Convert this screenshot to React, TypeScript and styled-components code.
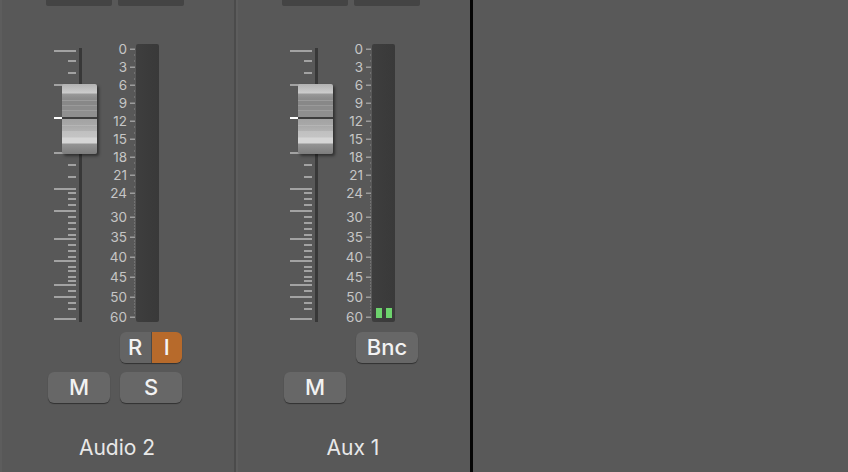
import styled, { createGlobalStyle } from "styled-components";

const GlobalStyle = createGlobalStyle`
  html, body {
    margin: 0;
    padding: 0;
    background: #585858;
  }
  body {
    font-family: Inter, "Liberation Sans", sans-serif;
    -webkit-font-smoothing: antialiased;
  }
`;

// page y where the fader / meter block starts
const TOP = 44;

const faderLong = [51, 85, 153, 189, 211, 239, 261, 285, 297, 319];
const faderShort = [
  61, 73, 165, 177, 193, 199, 205, 217, 223, 229, 235, 245, 251, 257, 267,
  271, 277, 281, 291, 303, 309,
];

const scaleMarks: [string, number][] = [
  ["0", 49], ["3", 67], ["6", 85], ["9", 103], ["12", 121], ["15", 139],
  ["18", 157], ["21", 175], ["24", 193], ["30", 217], ["35", 237],
  ["40", 257], ["45", 277], ["50", 297], ["60", 317],
];

const scaleDots: number[] = [];
for (let y = 55; y < 193; y += 6) if ((y - 49) % 18 !== 0) scaleDots.push(y);
for (let y = 196; y < 316; y += 3) {
  if (!scaleMarks.some(([, m]) => Math.abs(m - y) < 2)) scaleDots.push(y);
}

interface channel {
  name: string;
  topButtons: ("RI" | "Bnc" | null)[];
  bottomButtons: (string | null)[];
  level?: number;
}

const channels: channel[] = [
  { name: "Audio 2", topButtons: [null, "RI"], bottomButtons: ["M", "S"] },
  { name: "Aux 1", topButtons: [null, "Bnc"], bottomButtons: ["M", null], level: 10 },
];

function FaderTicks() {
  return (
    <svg width="44" height="278" viewBox="0 0 44 278" style={{ display: "block" }}>
      <rect x="25" y="4" width="3" height="274" fill="#383838" />
      {faderLong.map((y) => (
        <rect key={"l" + y} x="0" y={y - TOP - 1} width="22" height="2" fill="#a2a2a2" />
      ))}
      {faderShort.map((y) => (
        <rect key={"s" + y} x="14" y={y - TOP - 1} width="8" height="2" fill="#a2a2a2" />
      ))}
      <rect x="0" y={118 - TOP - 1} width="8" height="2" fill="#ffffff" />
    </svg>
  );
}

function ScaleTicks() {
  return (
    <svg width="8" height="278" viewBox="0 0 8 278">
      {scaleMarks.map(([label, y]) => (
        <rect key={label} x="2" y={y - TOP - 0.5} width="5" height="1.5" fill="#9c9c9c" />
      ))}
      {scaleDots.map((y) => (
        <rect key={y} x="6" y={y - TOP - 0.5} width="1" height="1" fill="#8c8c8c" />
      ))}
    </svg>
  );
}

function Strip({ ch }: { ch: channel }) {
  return (
    <StripWrap>
      <Tabs>
        <Tab />
        <Tab />
      </Tabs>
      <FaderRow>
        <Fader>
          <FaderTicks />
          <Cap />
        </Fader>
        <Scale>
          {scaleMarks.map(([label, y]) => (
            <ScaleLabel key={label} style={{ top: y - TOP - 8 }}>
              {label}
            </ScaleLabel>
          ))}
          <ScaleSvg>
            <ScaleTicks />
          </ScaleSvg>
        </Scale>
        <Meter>
          {ch.level ? (
            <>
              <Level $left={4} style={{ height: ch.level }} />
              <Level $left={14} style={{ height: ch.level }} />
            </>
          ) : null}
        </Meter>
      </FaderRow>
      <Buttons>
        {ch.topButtons.map((b, i) =>
          b === "RI" ? (
            <Split key={i}>
              <SplitHalf>R</SplitHalf>
              <SplitHalf $active>I</SplitHalf>
            </Split>
          ) : b ? (
            <Btn key={i}>{b}</Btn>
          ) : (
            <span key={i} />
          )
        )}
        {ch.bottomButtons.map((b, i) =>
          b ? <Btn key={"b" + i}>{b}</Btn> : <span key={"b" + i} />
        )}
      </Buttons>
      <Name>{ch.name}</Name>
    </StripWrap>
  );
}

export default function App() {
  return (
    <Page>
      <GlobalStyle />
      <Strip ch={channels[0]} />
      <Separator />
      <Strip ch={channels[1]} />
      <Edge />
      <Empty />
    </Page>
  );
}

const Page = styled.div`
  display: flex;
  width: 848px;
  height: 472px;
  overflow: hidden;
  background: #585858;
`;

const StripWrap = styled.div`
  width: 234px;
  flex-shrink: 0;
  display: flex;
  flex-direction: column;
  background: #585858;
  box-shadow: inset 2px 0 0 #5d5d5d;
`;

const Separator = styled.div`
  width: 2px;
  flex-shrink: 0;
  background: #4b4b4b;
`;

const Edge = styled.div`
  width: 3px;
  flex-shrink: 0;
  background: #050505;
`;

const Empty = styled.div`
  flex: 1;
  background: #595959;
`;

const Tabs = styled.div`
  display: flex;
  gap: 6px;
  padding-left: 46px;
  height: 6px;
`;

const Tab = styled.div`
  width: 66px;
  height: 6px;
  background: #444444;
  border-radius: 0 0 2px 2px;
`;

const FaderRow = styled.div`
  display: flex;
  height: 278px;
  margin-top: 38px;
  padding-left: 54px;
`;

const Fader = styled.div`
  position: relative;
  width: 44px;
  height: 278px;
`;

const Cap = styled.div`
  position: absolute;
  left: 8px;
  top: 40px;
  width: 35px;
  height: 70px;
  border-radius: 2px;
  box-shadow: 2px 2px 3px rgba(0, 0, 0, 0.45);
  background: linear-gradient(
    to bottom,
    #b2b2b2 0px,
    #cdcdcd 9px,
    #999999 10px,
    #8d8d8d 14px,
    #8a8a8a 16px,
    #9c9c9c 16px,
    #9c9c9c 17px,
    #888888 17px,
    #888888 21px,
    #9a9a9a 21px,
    #9a9a9a 22px,
    #8c8c8c 22px,
    #8c8c8c 26px,
    #9c9c9c 26px,
    #9c9c9c 27px,
    #8f8f8f 27px,
    #8f8f8f 33px,
    #3d3d3d 33px,
    #3d3d3d 35px,
    #a3a3a3 35px,
    #a8a8a8 41px,
    #b5b5b5 41px,
    #b5b5b5 42px,
    #aaaaaa 42px,
    #b2b2b2 47px,
    #c0c0c0 47px,
    #c4c4c4 53px,
    #d6d6d6 54px,
    #d6d6d6 59px,
    #949494 60px,
    #7d7d7d 70px
  );
`;

const Scale = styled.div`
  position: relative;
  width: 38px;
  height: 278px;
`;

const ScaleLabel = styled.div`
  position: absolute;
  right: 9px;
  height: 16px;
  line-height: 16px;
  font-size: 13.5px;
  color: #c6c6c6;
`;

const ScaleSvg = styled.div`
  position: absolute;
  left: 30px;
  top: 0;
  width: 8px;
  height: 278px;
`;

const Meter = styled.div`
  position: relative;
  width: 23px;
  height: 278px;
  border-radius: 2px;
  background: linear-gradient(to right, #3e3e3e, #393939);
`;

const Level = styled.div<{ $left: number }>`
  position: absolute;
  left: ${(p) => p.$left}px;
  bottom: 4px;
  width: 6px;
  background: #6dd36d;
`;

const Buttons = styled.div`
  display: grid;
  grid-template-columns: 62px 62px;
  grid-auto-rows: 31px;
  column-gap: 10px;
  row-gap: 9px;
  margin-top: 10px;
  padding-left: 48px;
`;

const Btn = styled.div`
  height: 31px;
  line-height: 31px;
  border-radius: 6px;
  background: #676767;
  box-shadow: 0 1px 1px rgba(0, 0, 0, 0.45);
  color: #f2f2f2;
  font-size: 22px;
  font-weight: 500;
  text-align: center;
`;

const Split = styled.div`
  display: flex;
  height: 31px;
  border-radius: 6px;
  overflow: hidden;
  box-shadow: 0 1px 1px rgba(0, 0, 0, 0.45);
`;

const SplitHalf = styled.div<{ $active?: boolean }>`
  flex: 1;
  line-height: 31px;
  text-align: center;
  font-size: 22px;
  font-weight: 500;
  color: #f4f4f4;
  background: ${(p) => (p.$active ? "#b76a2b" : "#646464")};
  border-left: ${(p) => (p.$active ? "1px solid #4a4a4a" : "none")};
`;

const Name = styled.div`
  margin-top: 33px;
  height: 24px;
  line-height: 24px;
  font-size: 21px;
  color: #e8e8e8;
  text-align: center;
`;
